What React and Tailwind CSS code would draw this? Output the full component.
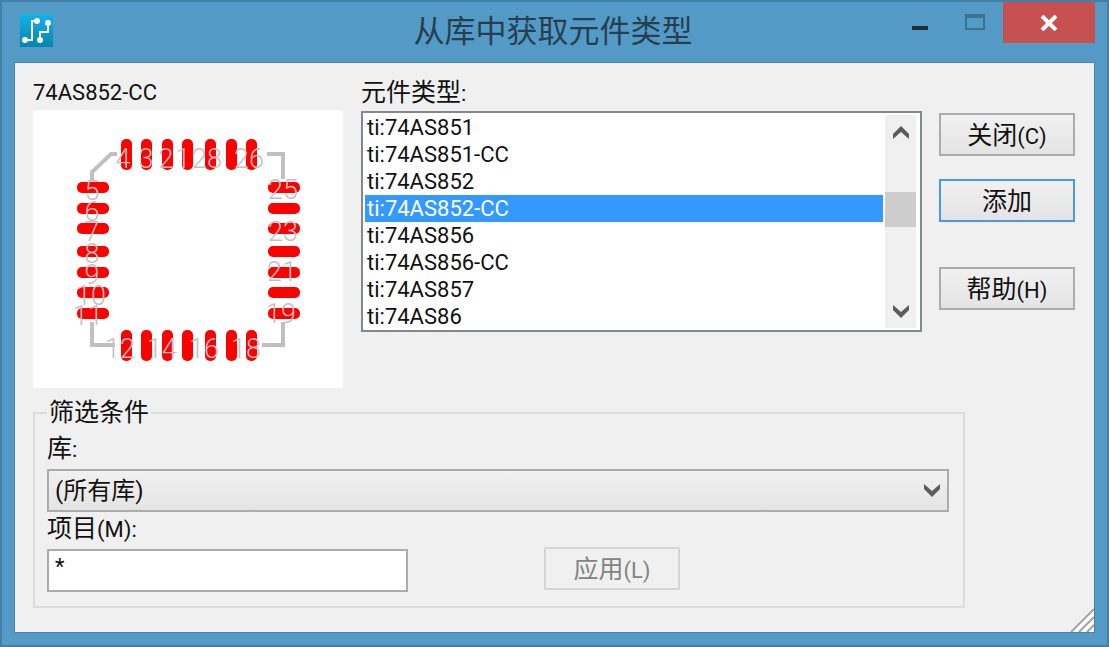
import React, { useState } from "react";

const parts = [
  "ti:74AS851",
  "ti:74AS851-CC",
  "ti:74AS852",
  "ti:74AS852-CC",
  "ti:74AS856",
  "ti:74AS856-CC",
  "ti:74AS857",
  "ti:74AS86",
];

const padColumns = [126, 146, 167, 187, 210, 231, 251];
const padRows = [187, 208, 228, 251, 272, 292, 313];

// number, centre x, baseline y
const pinLabels = [
  ["4", 123, 168],
  ["3", 146, 168],
  ["2", 166, 168],
  ["1", 183, 168],
  ["28", 207, 168],
  ["26", 249, 168],
  ["5", 92, 200],
  ["6", 92, 221],
  ["7", 92, 241],
  ["8", 92, 263],
  ["9", 92, 284],
  ["10", 91, 305],
  ["11", 88, 325],
  ["25", 283, 199],
  ["23", 283, 241],
  ["21", 282, 281],
  ["19", 281, 323],
  ["12", 120, 358],
  ["14", 162, 358],
  ["16", 204, 358],
  ["18", 246, 358],
];

function AppLogo() {
  return (
    <svg viewBox="0 0 33 33" className="w-[33px] h-[33px]" aria-hidden="true">
      <defs>
        <linearGradient id="logo" x1="0" y1="0" x2="0" y2="1">
          <stop offset="0" stopColor="#12b3ea" />
          <stop offset="1" stopColor="#0784ae" />
        </linearGradient>
      </defs>
      <rect width="33" height="33" fill="url(#logo)" />
      <g fill="none" stroke="#fff" strokeWidth="2">
        <path d="M5 26H12V7H17" />
        <path d="M20 26V18H28V9" />
      </g>
      <g fill="#fff">
        <circle cx="5" cy="26" r="3" />
        <circle cx="17" cy="7" r="3" />
        <circle cx="20" cy="26" r="3" />
        <circle cx="28" cy="9" r="3" />
      </g>
    </svg>
  );
}

function Chevron({ up }) {
  return (
    <svg viewBox="0 0 16 13" className="w-4 h-[13px]" aria-hidden="true">
      <path
        d={up ? "M0 8L8 0L16 8V13L8 6L0 13Z" : "M0 5L8 13L16 5V0L8 7L0 0Z"}
        fill="#5c5c5c"
      />
    </svg>
  );
}

function FootprintPreview() {
  return (
    <svg
      viewBox="33 110 310 278"
      className="block w-full bg-white"
      role="img"
      aria-label="74AS852-CC"
    >
      <g fill="none" stroke="#c0c0c0" strokeWidth="4">
        <path d="M92 180V172L111 154H117" />
        <path d="M267 154H283V179" />
        <path d="M92 322V345H115" />
        <path d="M262 345H283V322" />
      </g>
      <g fill="#ff0000">
        {padColumns.map((x) => (
          <React.Fragment key={x}>
            <rect x={x - 5} y="139" width="11" height="31" rx="5" />
            <rect x={x - 5} y="330" width="11" height="31" rx="5" />
          </React.Fragment>
        ))}
        {padRows.map((y) => (
          <React.Fragment key={y}>
            <rect x="77" y={y - 5} width="32" height="11" rx="5" />
            <rect x="268" y={y - 5} width="32" height="11" rx="5" />
          </React.Fragment>
        ))}
      </g>
      <g
        fill="#c4c0c0"
        textAnchor="middle"
        className="font-['Roboto','Liberation_Sans',sans-serif] font-light text-[27px]"
      >
        {pinLabels.map(([text, x, y]) => (
          <text key={text} x={x} y={y}>
            {text}
          </text>
        ))}
      </g>
    </svg>
  );
}

function DialogButton({ children, primary }) {
  return (
    <button
      type="button"
      className={`h-[43px] w-full pt-[2px] border-2 bg-linear-to-b from-[#f1f1f1] to-[#e4e4e4] text-center ${
        primary ? "border-[#4a98ec]" : "border-[#acacac]"
      }`}
    >
      {children}
    </button>
  );
}

// Access key suffix, e.g. (C)
function Hotkey({ children }) {
  return <span className="text-[22px]">{children}</span>;
}

function App() {
  const [selected, setSelected] = useState("ti:74AS852-CC");
  const [item, setItem] = useState("*");

  return (
    <div className="min-h-screen flex flex-col bg-[#549ac6] border-2 border-[#437fa6] px-3 pb-3 text-[25px] leading-[27px] text-[#111] font-['Roboto','Noto_Sans_CJK_SC',sans-serif]">
      {/* Title bar */}
      <header className="flex items-start h-[60px]">
        <div className="w-[199px] pl-[6px] pt-3">
          <AppLogo />
        </div>
        <h1 className="flex-1 pt-[10px] text-center text-[31px] leading-[40px] text-[#263f50]">
          从库中获取元件类型
        </h1>
        <div className="flex items-start">
          <button
            type="button"
            aria-label="最小化"
            className="w-[54px] h-10 flex justify-center pt-6"
          >
            <span className="w-4 h-1 bg-[#222d35]" />
          </button>
          <button
            type="button"
            aria-label="最大化"
            className="w-[56px] h-10 flex justify-center pt-3"
          >
            <span className="w-5 h-4 border-2 border-t-4 border-[#3d728f]" />
          </button>
          <button
            type="button"
            aria-label="关闭"
            className="w-[92px] h-[41px] flex items-center justify-center bg-[#c75050]"
          >
            <svg viewBox="0 0 18 16" className="w-[18px] h-4">
              <path d="M2 1L16 15M16 1L2 15" stroke="#fff" strokeWidth="4" />
            </svg>
          </button>
        </div>
      </header>

      {/* Dialog body */}
      <main className="relative flex-1 bg-[#f0f0f0] border border-[#4784a9] pl-[18px] pr-[19px] pt-4 pb-6">
        <div className="flex">
          <section className="w-[310px] shrink-0">
            <h2 className="h-[31px] text-[22px]">74AS852-CC</h2>
            <FootprintPreview />
          </section>

          <section className="flex-1 min-w-0 ml-[18px] mr-[17px]">
            <h2 id="part-label" className="h-8">
              元件类型<Hotkey>:</Hotkey>
            </h2>
            <div className="flex h-[221px] border-2 border-[#828790] bg-white">
              <ul
                role="listbox"
                aria-labelledby="part-label"
                className="flex-1 pl-[2px] pt-[1px] text-[22px] leading-[27px]"
              >
                {parts.map((part) => (
                  <li
                    key={part}
                    role="option"
                    aria-selected={part === selected}
                    onClick={() => setSelected(part)}
                    className={`pl-[2px] ${
                      part === selected ? "bg-[#3399ff] text-white" : ""
                    }`}
                  >
                    {part}
                  </li>
                ))}
              </ul>
              <div className="ml-[2px] mr-1 my-[2px] w-[31px] flex flex-col bg-[#f0f0f0]">
                <button
                  type="button"
                  aria-label="向上滚动"
                  className="h-[34px] flex items-center justify-center"
                >
                  <Chevron up />
                </button>
                <div className="flex-1 pt-[43px]">
                  <div className="h-[35px] bg-[#cdcdcd]" />
                </div>
                <button
                  type="button"
                  aria-label="向下滚动"
                  className="h-[34px] flex items-center justify-center"
                >
                  <Chevron />
                </button>
              </div>
            </div>
          </section>

          <div className="w-[136px] shrink-0 pt-[34px]">
            <DialogButton>
              关闭<Hotkey>(C)</Hotkey>
            </DialogButton>
            <div className="mt-[23px] mb-[45px]">
              <DialogButton primary>添加</DialogButton>
            </div>
            <DialogButton>
              帮助<Hotkey>(H)</Hotkey>
            </DialogButton>
          </div>
        </div>

        {/* Filter */}
        <fieldset className="mt-[11px] mr-[110px] h-[209px] border-2 border-[#dcdcdc] pl-3 pr-[14px]">
          <legend className="px-[2px]">筛选条件</legend>
          <label htmlFor="library" className="block mt-2 pt-[1px] h-[35px]">
            库<Hotkey>:</Hotkey>
          </label>
          <div className="relative">
            <select
              id="library"
              className="block w-full h-[43px] appearance-none border-2 border-[#acacac] bg-linear-to-b from-[#f1f1f1] to-[#e4e4e4] pl-[6px] pt-[2px] text-[24px]"
            >
              <option>(所有库)</option>
            </select>
            <span className="absolute right-[9px] top-[15px] pointer-events-none">
              <Chevron />
            </span>
          </div>
          <label htmlFor="item" className="block pt-[3px] h-[35px]">
            项目<Hotkey>(M):</Hotkey>
          </label>
          <div className="flex items-start">
            <input
              id="item"
              type="text"
              value={item}
              onChange={(e) => setItem(e.target.value)}
              className="mt-[2px] w-[361px] h-[43px] border-2 border-[#acacac] bg-white px-[6px] pb-2 text-[22px] outline-none"
            />
            <button
              type="button"
              disabled
              className="ml-[136px] w-[136px] h-[43px] pt-[2px] border-2 border-[#d5d5d5] text-[#838383]"
            >
              应用<Hotkey>(L)</Hotkey>
            </button>
          </div>
        </fieldset>

        {/* Resize grip */}
        <svg
          viewBox="0 0 24 24"
          className="absolute right-0 bottom-0 w-6 h-6"
          aria-hidden="true"
        >
          <path
            d="M3 24L24 3M11 24L24 11M19 24L24 19"
            stroke="#fff"
            strokeWidth="6"
          />
          <path
            d="M1 24L24 1M9 24L24 9M17 24L24 17"
            stroke="#a8a09c"
            strokeWidth="2"
          />
        </svg>
      </main>
    </div>
  );
}

export default App;
